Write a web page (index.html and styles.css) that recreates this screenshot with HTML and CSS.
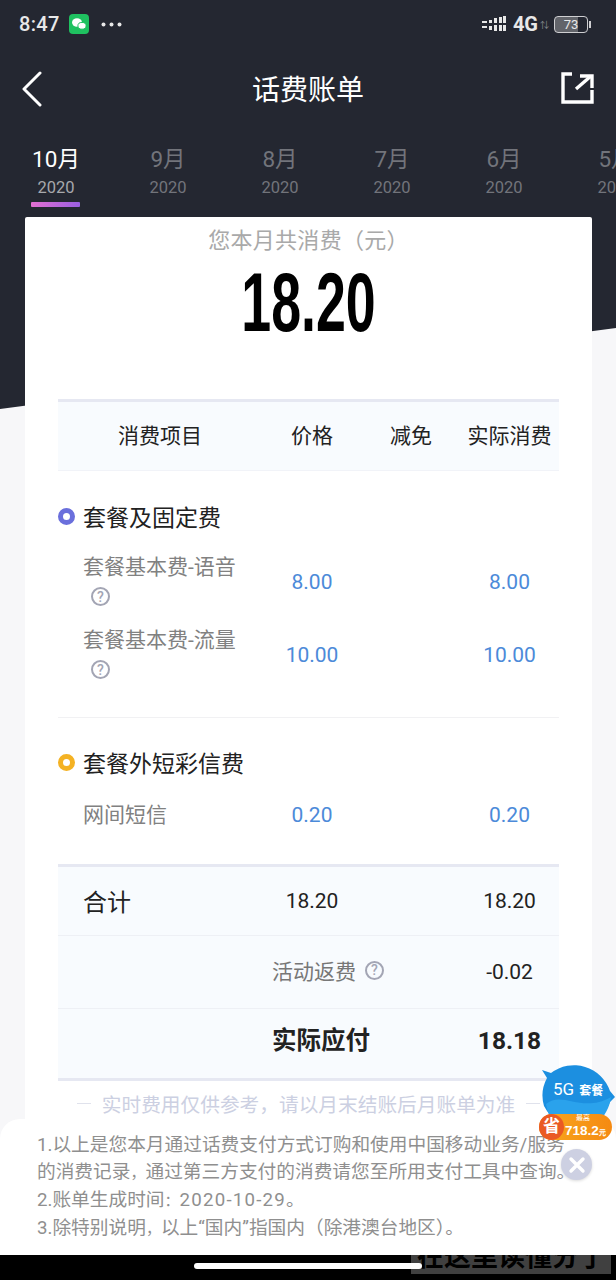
FILE: index.html
```html
<!DOCTYPE html>
<html lang="zh-CN">
<head>
    <meta charset="UTF-8">
    <meta name="viewport" content="width=device-width, initial-scale=1.0">
    <title>话费账单</title>
    <link rel="stylesheet" href="styles.css">
</head>
<body>
    <div class="page">
        <div class="backdrop"></div>
        <div class="status-bar">
            <span class="time">8:47</span>
            <span class="wechat">
                <svg width="20" height="20" viewBox="0 0 20 20"><rect width="20" height="20" rx="4" fill="#1fc160"/><ellipse cx="8" cy="8.500" rx="5" ry="4.200" fill="#fff"/><ellipse cx="13" cy="11.800" rx="4.100" ry="3.400" fill="#fff" stroke="#1fc160"/></svg>
            </span>
            <svg class="dots" width="21" height="5" viewBox="0 0 21 5" fill="#e8e8e8"><circle cx="2.500" cy="2.500" r="2"/><circle cx="10.500" cy="2.500" r="2"/><circle cx="18.500" cy="2.500" r="2"/></svg>
            <span class="status-right">
                <svg width="24" height="18" viewBox="0 0 24 18" fill="#e8e8e8"><rect x="0" y="6" width="5" height="2"/><rect x="0" y="11" width="5" height="2"/><rect x="7" y="5" width="3" height="3"/><rect x="7" y="11" width="3" height="4"/><rect x="12" y="3" width="3" height="5"/><rect x="12" y="10" width="3" height="6"/><rect x="17" y="2" width="3" height="6"/><rect x="17" y="10" width="3" height="6"/><rect x="21" y="1" width="3" height="7"/><rect x="21" y="10" width="3" height="6"/></svg>
                <span class="net">4G</span>
                <span class="net-arrows">⇅</span>
                <span class="battery"><span class="battery-num">73</span></span>
                <span class="battery-cap"></span>
            </span>
        </div>
        <div class="nav">
            <svg class="back" width="22" height="36" viewBox="0 0 22 36" fill="none" stroke="#fff" stroke-width="3" stroke-linecap="round" stroke-linejoin="round"><path d="M19 2 L3 18 L19 34"/></svg>
            <h1>话费账单</h1>
            <svg class="share" width="34" height="34" viewBox="0 0 34 34" fill="none" stroke="#fff" stroke-width="3.400"><path d="M11 3 H2 V31 H31 V19"/><path d="M15 18 L30 5"/><path d="M19 5 H31 V17"/></svg>
        </div>
        <div class="tabs">
            <div class="tab active"><span class="month">10月</span><span class="year">2020</span></div>
            <div class="tab"><span class="month">9月</span><span class="year">2020</span></div>
            <div class="tab"><span class="month">8月</span><span class="year">2020</span></div>
            <div class="tab"><span class="month">7月</span><span class="year">2020</span></div>
            <div class="tab"><span class="month">6月</span><span class="year">2020</span></div>
            <div class="tab"><span class="month">5月</span><span class="year">2020</span></div>
        </div>
        <div class="card">
            <div class="summary-label">您本月共消费（元）</div>
            <div class="summary-amount">18.20</div>
            <div class="table-head">
                <span class="col-name">消费项目</span><span>价格</span><span>减免</span><span>实际消费</span>
            </div>
            <div class="group">
                <div class="group-title"><span class="dot dot-blue"></span>套餐及固定费</div>
                <div class="row">
                    <div class="col-name">套餐基本费-语音<span class="help">?</span></div>
                    <span class="val">8.00</span><span></span><span class="val">8.00</span>
                </div>
                <div class="row">
                    <div class="col-name">套餐基本费-流量<span class="help">?</span></div>
                    <span class="val">10.00</span><span></span><span class="val">10.00</span>
                </div>
            </div>
            <div class="group group-second">
                <div class="group-title"><span class="dot dot-yellow"></span>套餐外短彩信费</div>
                <div class="row row-single">
                    <div class="col-name">网间短信</div>
                    <span class="val">0.20</span><span></span><span class="val">0.20</span>
                </div>
            </div>
            <div class="totals">
                <div class="total-row">
                    <span class="total-name">合计</span><span>18.20</span><span></span><span>18.20</span>
                </div>
                <div class="total-row rebate">
                    <span class="rebate-label">活动返费<span class="help help-inline">?</span></span><span>-0.02</span>
                </div>
                <div class="total-row payable">
                    <span class="rebate-label">实际应付</span><span>18.18</span>
                </div>
            </div>
            <div class="tip"><span class="tip-dash"></span>实时费用仅供参考，请以月末结账后月账单为准<span class="tip-dash"></span></div>
        </div>
        <div class="notice">
            <p>1.以上是您本月通过话费支付方式订购和使用中国移动业务/服务的消费记录<span class="punct">，</span>通过第三方支付的消费请您至所用支付工具中查询。</p>
            <p>2.账单生成时间<span class="punct">：</span><span class="date">2020-10-29</span>。</p>
            <p>3.除特别说明<span class="punct">，</span>以上“国内”指国内（除港澳台地区）。</p>
        </div>
        <div class="promo">
            <svg width="78" height="76" viewBox="0 0 78 76"><path d="M4 6 L13 9 A38 38 0 0 1 72 27 L77 33 L72 38 A36 36 0 0 1 6 42 A37 37 0 0 1 9 14 Z" fill="#1c8fe0"/><path d="M8 40 C24 26 44 50 73 33 C70 56 50 70 30 68 C18 64 10 54 8 40 Z" fill="#2aa2ec"/></svg>
            <span class="promo-title"><b>5G</b>套餐</span>
            <div class="promo-tag"><span class="promo-save">省</span><span class="promo-small">最高</span><span class="promo-price">718.2<i>元</i></span></div>
        </div>
        <div class="promo-close">
            <svg width="18" height="18" viewBox="0 0 18 18" stroke="#fff" stroke-width="3.400" stroke-linecap="round"><path d="M3 3 L15 15 M15 3 L3 15"/></svg>
        </div>
        <div class="bottom-bar">
            <span class="watermark">在这里读懂分了</span>
            <span class="home-line"></span>
        </div>
    </div>
</body>
</html>
```

FILE: styles.css
```css
* {
    box-sizing: border-box;
}
body {
    margin: 0;
    font-family: Roboto, "Noto Sans CJK SC", sans-serif;
    background-color: #f7f7f9;
}
.page {
    position: relative;
    width: 616px;
    height: 1280px;
    overflow: hidden;
    background-color: #f7f7f9;
}
.backdrop {
    position: absolute;
    top: 0;
    left: 0;
    width: 616px;
    height: 409px;
    background-color: #242731;
    clip-path: polygon(0 0, 100% 0, 100% 328px, 0 409px);
}
.status-bar {
    position: relative;
    display: flex;
    align-items: center;
    height: 48px;
    padding: 0 25px 0 19px;
    color: #e8e8e8;
}
.time {
    font-size: 20px;
    font-weight: 500;
    letter-spacing: 0.3px;
}
.wechat {
    display: flex;
    margin-left: 9px;
}
.dots {
    margin-left: 12px;
}
.status-right {
    display: flex;
    align-items: center;
    margin-left: auto;
}
.net {
    margin-left: 7px;
    font-size: 20px;
    font-weight: 700;
}
.net-arrows {
    margin-left: 2px;
    font-size: 9px;
    color: #8a8c92;
}
.battery {
    display: flex;
    align-items: center;
    justify-content: center;
    width: 34px;
    height: 17px;
    margin-left: 5px;
    border: 1.5px solid #cfcfd2;
    border-radius: 4px;
    background: linear-gradient(90deg, #62646a 73%, transparent 73%);
}
.battery-num {
    font-size: 13px;
    color: #e8e8e8;
}
.battery-cap {
    width: 2px;
    height: 7px;
    margin-left: 1px;
    background-color: #cfcfd2;
}
.nav {
    position: relative;
    display: flex;
    align-items: center;
    justify-content: center;
    height: 82px;
    padding-bottom: 3px;
}
.nav h1 {
    margin: 0;
    font-size: 28px;
    font-weight: 400;
    color: #fff;
}
.back {
    position: absolute;
    left: 21px;
    top: 23px;
}
.share {
    position: absolute;
    left: 561px;
    top: 23px;
}
.tabs {
    position: relative;
    display: flex;
    height: 87px;
    padding-top: 14px;
}
.tab {
    display: flex;
    flex: 0 0 112px;
    flex-direction: column;
    align-items: center;
    color: #72747b;
}
.month {
    font-size: 22.5px;
    line-height: 30px;
}
.year {
    font-size: 16.5px;
    line-height: 20px;
    margin-top: 4px;
}
.tab.active {
    position: relative;
    color: #fff;
}
.tab.active .year {
    color: #a7a8ac;
}
.tab.active::after {
    content: "";
    position: absolute;
    left: 31px;
    top: 58px;
    width: 49px;
    height: 5px;
    border-radius: 1px;
    background: linear-gradient(90deg, #e36fd2, #9a5fe0);
}
.card {
    position: relative;
    height: 1000px;
    margin: 0 24px 0 25px;
    padding: 9px 33px 0;
    border-radius: 2px 2px 0 0;
    background-color: #fff;
}
.summary-label {
    font-size: 22px;
    letter-spacing: 0.3px;
    line-height: 30px;
    text-align: center;
    color: #a9a9a9;
}
.summary-amount {
    margin-top: 8px;
    height: 76px;
    font-family: "Liberation Sans", sans-serif;
    font-size: 84px;
    font-weight: 700;
    line-height: 76px;
    text-align: center;
    color: #000;
    transform: scaleX(0.64);
}
.table-head, .row, .total-row {
    display: grid;
    grid-template-columns: 204px 100px 98px 99px;
    align-items: center;
    text-align: center;
}
.table-head {
    height: 72px;
    margin-top: 59px;
    padding-bottom: 5px;
    border-top: 3px solid #e6e8f2;
    border-bottom: 1px solid #f1f3f8;
    background-color: #f8fbfe;
    font-size: 21px;
    color: #222;
}
.group {
    padding-top: 29px;
    padding-bottom: 28px;
    border-bottom: 1px solid #f1f1f3;
}
.group-title {
    display: flex;
    align-items: center;
    height: 32px;
    font-size: 23px;
    color: #222;
}
.dot {
    width: 17px;
    height: 17px;
    margin-right: 8px;
    border-radius: 50%;
    border: 5px solid;
    background-color: #fff;
}
.dot-blue {
    border-color: #6a6fdc;
}
.dot-yellow {
    border-color: #f4b223;
}
.row {
    height: 73px;
    font-size: 21px;
    line-height: 28px;
}
.row .col-name {
    padding-left: 25px;
    font-size: 21px;
    line-height: 29px;
    text-align: left;
    color: #818181;
}
.val {
    padding-top: 4px;
    color: #4c8ad9;
}
.help {
    display: flex;
    align-items: center;
    justify-content: center;
    width: 19px;
    height: 19px;
    margin: 5px 0 0 8px;
    border: 2px solid #a3a5b4;
    border-radius: 50%;
    font-size: 14px;
    line-height: 1;
    font-weight: 500;
    color: #a3a5b4;
}
.help-inline {
    margin: 0 0 0 9px;
}
.group-title + .row {
    margin-top: 11px;
}
.group-second {
    padding-top: 28px;
    padding-bottom: 0;
    border-bottom: 0;
}
.row-single {
    height: 38px;
}
.group-second .group-title + .row {
    margin-top: 18px;
}
.group-second .val {
    padding-top: 0;
}
.totals {
    margin-top: 30px;
    border-top: 3px solid #e6e8f2;
    border-bottom: 3px solid #e6e8f2;
    background-color: #f8fbfe;
    font-size: 21px;
    color: #222;
}
.total-row {
    height: 69px;
    border-bottom: 1px solid #eef0f5;
}
.total-name {
    padding: 0 0 2px 25px;
    font-size: 24px;
    text-align: left;
}
.rebate {
    height: 73px;
}
.rebate, .payable {
    grid-template-columns: 402px 99px;
}
.rebate-label {
    display: flex;
    align-items: center;
    padding-left: 214px;
}
.rebate .rebate-label {
    padding-bottom: 4px;
    color: #777;
}
.payable {
    height: 69px;
    padding-bottom: 6px;
    border-bottom: 0;
    font-size: 24.5px;
    font-weight: 700;
}
.payable .rebate-label {
    padding-bottom: 4px;
}
.tip {
    display: flex;
    align-items: center;
    justify-content: center;
    margin: 8px -20px 0;
    font-size: 19.7px;
    color: #ccd0e2;
}
.tip-dash {
    width: 14px;
    height: 1px;
    margin: 0 11px;
    background-color: #e0e2ec;
}
.notice {
    position: absolute;
    left: 0;
    top: 1119px;
    width: 616px;
    height: 136px;
    padding: 13px 38px 0 37px;
    border-radius: 20px 20px 0 0;
    background-color: #fff;
    font-size: 18.7px;
    line-height: 27px;
    color: #8f8f8f;
}
.notice p {
    margin: 0;
}
.punct {
    font-size: 15px;
}
.date {
    letter-spacing: 1.2px;
}
.promo {
    position: absolute;
    left: 538px;
    top: 1064px;
    width: 78px;
    height: 78px;
}
.promo svg {
    display: block;
}
.promo-title {
    position: absolute;
    left: 15px;
    top: 15px;
    font-size: 12px;
    font-weight: 700;
    white-space: nowrap;
    color: #fff;
}
.promo-title b {
    margin-right: 5px;
    font-size: 17px;
    font-weight: 400;
}
.promo-tag {
    position: absolute;
    left: 1px;
    top: 50px;
    width: 73px;
    height: 26px;
    border-radius: 13px;
    background: linear-gradient(90deg, #f8a81e, #f58a12);
    color: #fff;
}
.promo-save {
    position: absolute;
    left: 0;
    top: 0;
    width: 25px;
    height: 26px;
    border-radius: 50%;
    background-color: #ea5a24;
    font-size: 17px;
    font-weight: 700;
    line-height: 25px;
    text-align: center;
}
.promo-small {
    position: absolute;
    left: 37px;
    top: 0;
    font-size: 7px;
    line-height: 9px;
}
.promo-price {
    position: absolute;
    left: 26px;
    top: 9px;
    font-family: "Liberation Sans", sans-serif;
    font-size: 13.5px;
    font-weight: 700;
    line-height: 16px;
    white-space: nowrap;
}
.promo-price i {
    font-size: 7px;
    font-style: normal;
}
.promo-close {
    position: absolute;
    left: 561px;
    top: 1149px;
    display: flex;
    align-items: center;
    justify-content: center;
    width: 31px;
    height: 31px;
    border-radius: 50%;
    background-color: #cdd0e2;
    box-shadow: 0 1px 3px rgba(0, 0, 0, 0.15);
}
.bottom-bar {
    position: absolute;
    left: 0;
    top: 1255px;
    width: 616px;
    height: 25px;
    overflow: hidden;
    background-color: #000;
}
.home-line {
    position: absolute;
    left: 194px;
    top: 8px;
    width: 228px;
    height: 6px;
    border-radius: 3px;
    background-color: #fff;
}
.watermark {
    position: absolute;
    left: 411px;
    top: 0;
    width: 200px;
    height: 19px;
    padding-left: 6px;
    overflow: hidden;
    background-color: #404040;
    font-size: 27px;
    font-weight: 700;
    line-height: 4px;
    white-space: nowrap;
    color: #000;
}
```
